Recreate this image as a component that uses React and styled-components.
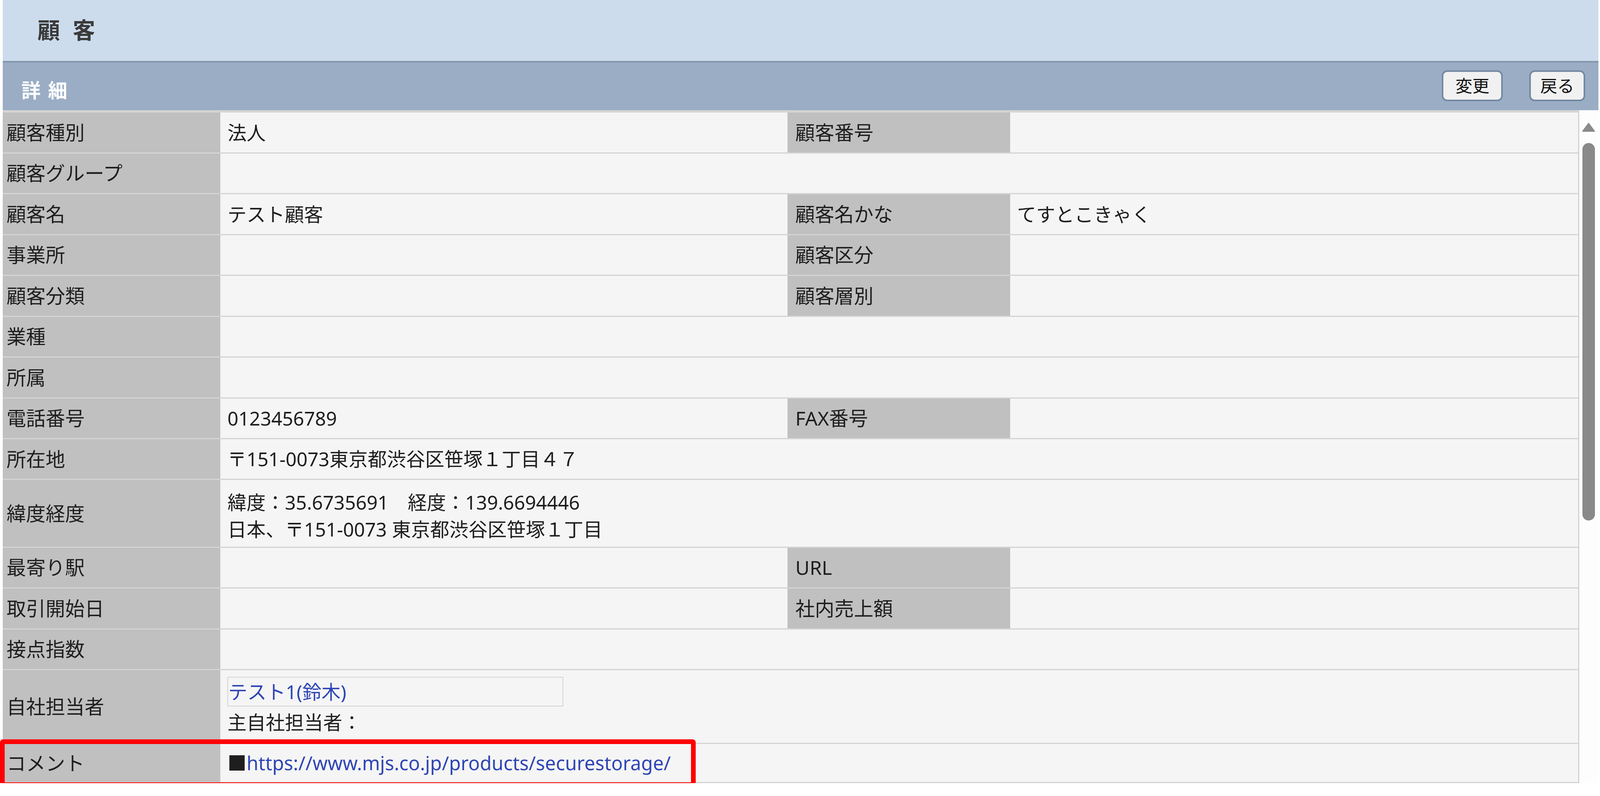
import React from 'react';
import styled, { createGlobalStyle } from 'styled-components';

// the layout is measured on a 4136px wide screen; u() keeps it in step with the viewport
const u = (n) => `calc(${n} * var(--u))`;

const GlobalStyle = createGlobalStyle`
    :root {
        --u: calc(100vw / 4136);
    }
    html, body {
        margin: 0;
        padding: 0;
        background: #ffffff;
        overflow: hidden;
    }
    body {
        padding: 0 ${u(4)} 0 ${u(7)};
        font-family: "Noto Sans", "Noto Sans CJK JP", sans-serif;
        color: #1e1e1e;
    }
    *, *::before, *::after {
        box-sizing: border-box;
    }
`;

const Page = styled.div`
    display: flex;
    flex-direction: column;
`;

const TitleBar = styled.header`
    height: ${u(162)};
    background: #ccdcec;
    border-bottom: ${u(5)} solid #8195ac;
    display: flex;
    align-items: center;
    padding-left: ${u(90)};
`;

const TitleText = styled.h1`
    margin: 0;
    font-size: ${u(58)};
    font-weight: 700;
    letter-spacing: ${u(9)};
    color: #3a3a3a;
    line-height: 1;
`;

const SectionBar = styled.div`
    height: ${u(123)};
    background: #9aadc5;
    display: flex;
    align-items: center;
    justify-content: space-between;
    padding: 0 ${u(34)} 0 ${u(48)};
`;

const SectionText = styled.span`
    font-size: ${u(50)};
    font-weight: 700;
    letter-spacing: ${u(3)};
    color: #ffffff;
    padding-top: ${u(16)};
`;

const ButtonGroup = styled.div`
    display: flex;
    gap: ${u(68)};
    padding-bottom: ${u(4)};
`;

const Button = styled.button`
    width: ${(p) => u(p.w)};
    height: ${u(80)};
    padding: 0;
    border: ${u(5)} solid #7389a3;
    border-radius: ${u(14)};
    background: #f1f1f1;
    font-family: inherit;
    font-size: ${u(44)};
    color: #111111;
    line-height: 1;
    cursor: pointer;
`;

const Body = styled.div`
    display: flex;
    align-items: flex-start;
`;

const Table = styled.div`
    flex: 1;
    min-width: 0;
    border-top: ${u(6.5)} solid #d5d5d5;
    border-right: ${u(4)} solid #d2d2d2;
`;

const Row = styled.div`
    position: relative;
    display: grid;
    grid-template-columns: ${u(563)} ${u(1466)} ${u(575)} 1fr;
    min-height: ${(p) => u((p.h || 102) + 3.5)};
    border-bottom: ${u(3.5)} solid #d4d4d4;
`;

const Label = styled.div`
    display: flex;
    align-items: center;
    background: #c0c0c0;
    padding-left: ${(p) => u(p.second ? 20 : 10)};
    font-size: ${u(50.5)};
    line-height: 1.4;
    color: #1e1e1e;
`;

const Value = styled.div`
    display: flex;
    flex-direction: column;
    justify-content: center;
    background: #f5f5f5;
    padding: ${(p) => u(p.offset || 0)} ${u(18)} 0;
    font-size: ${u(49.5)};
    line-height: 1.4;
    color: #1e1e1e;
    grid-column: ${(p) => (p.wide ? 'span 3' : 'auto')};
`;

const StaffCell = styled(Value)`
    justify-content: flex-start;
    padding-top: ${u(17)};
`;

const StaffBox = styled.div`
    width: ${u(868)};
    height: ${u(77)};
    border: ${u(3)} solid #d3d3d3;
    display: flex;
    align-items: center;
`;

const StaffNote = styled.div`
    margin-top: ${u(6)};
`;

const Link = styled.a`
    color: #2f45b4;
    text-decoration: none;
`;

const Highlight = styled.div`
    position: absolute;
    left: ${u(-7)};
    top: ${u(-12)};
    width: ${u(1798)};
    height: ${u(123)};
    border: ${u(13)} solid #ff0000;
    border-radius: ${u(8)};
    pointer-events: none;
`;

const ScrollBar = styled.div`
    width: ${u(50)};
    flex-shrink: 0;
    align-self: stretch;
    background: #fdfdfd;
    display: flex;
    flex-direction: column;
    align-items: center;
    padding-top: ${u(32)};
`;

const ArrowIcon = styled.svg`
    width: ${u(34)};
    height: ${u(24)};
    display: block;
`;

const ScrollThumb = styled.div`
    width: ${u(32)};
    height: ${u(975)};
    margin-top: ${u(29)};
    border-radius: ${u(16)};
    background: #898989;
`;

const rows = [
    { label: '顧客種別', value: '法人', label2: '顧客番号', value2: '' },
    { label: '顧客グループ', value: '' },
    { label: '顧客名', value: 'テスト顧客', label2: '顧客名かな', value2: 'てすとこきゃく' },
    { label: '事業所', value: '', label2: '顧客区分', value2: '' },
    { label: '顧客分類', value: '', label2: '顧客層別', value2: '' },
    { label: '業種', value: '' },
    { label: '所属', value: '' },
    { label: '電話番号', value: '0123456789', label2: 'FAX番号', value2: '' },
    { label: '所在地', value: '〒151-0073東京都渋谷区笹塚１丁目４７' },
];

const rows2 = [
    { label: '最寄り駅', value: '', label2: 'URL', value2: '' },
    { label: '取引開始日', value: '', label2: '社内売上額', value2: '' },
    { label: '接点指数', value: '' },
];

function InfoRow({ row }) {
    const paired = row.label2 !== undefined;
    return (
        <Row>
            <Label>{row.label}</Label>
            <Value wide={!paired}>{row.value}</Value>
            {paired && <Label second>{row.label2}</Label>}
            {paired && <Value>{row.value2}</Value>}
        </Row>
    );
}

function App() {
    return (
        <Page>
            <GlobalStyle />
            <TitleBar>
                <TitleText>顧 客</TitleText>
            </TitleBar>
            <SectionBar>
                <SectionText>詳 細</SectionText>
                <ButtonGroup>
                    <Button w={158}>変更</Button>
                    <Button w={145}>戻る</Button>
                </ButtonGroup>
            </SectionBar>
            <Body>
                <Table>
                    {rows.map((row) => (
                        <InfoRow key={row.label} row={row} />
                    ))}
                    <Row h={171.5}>
                        <Label>緯度経度</Label>
                        <Value wide offset={12}>
                            <div>緯度：35.6735691　経度：139.6694446</div>
                            <div>日本、〒151-0073 東京都渋谷区笹塚１丁目</div>
                        </Value>
                    </Row>
                    {rows2.map((row) => (
                        <InfoRow key={row.label} row={row} />
                    ))}
                    <Row h={187}>
                        <Label>自社担当者</Label>
                        <StaffCell wide>
                            <StaffBox>
                                <Link href="#">テスト1(鈴木)</Link>
                            </StaffBox>
                            <StaffNote>主自社担当者：</StaffNote>
                        </StaffCell>
                    </Row>
                    <Row h={98}>
                        <Label>コメント</Label>
                        <Value wide>
                            <div>
                                ■<Link href="#">https://www.mjs.co.jp/products/securestorage/</Link>
                            </div>
                        </Value>
                        <Highlight />
                    </Row>
                </Table>
                <ScrollBar>
                    <ArrowIcon viewBox="0 0 34 24">
                        <path d="M17 2 L32 22 L2 22 Z" fill="#8a8a8a" stroke="#8a8a8a" strokeWidth="3" strokeLinejoin="round" />
                    </ArrowIcon>
                    <ScrollThumb />
                </ScrollBar>
            </Body>
        </Page>
    );
}

export default App;
